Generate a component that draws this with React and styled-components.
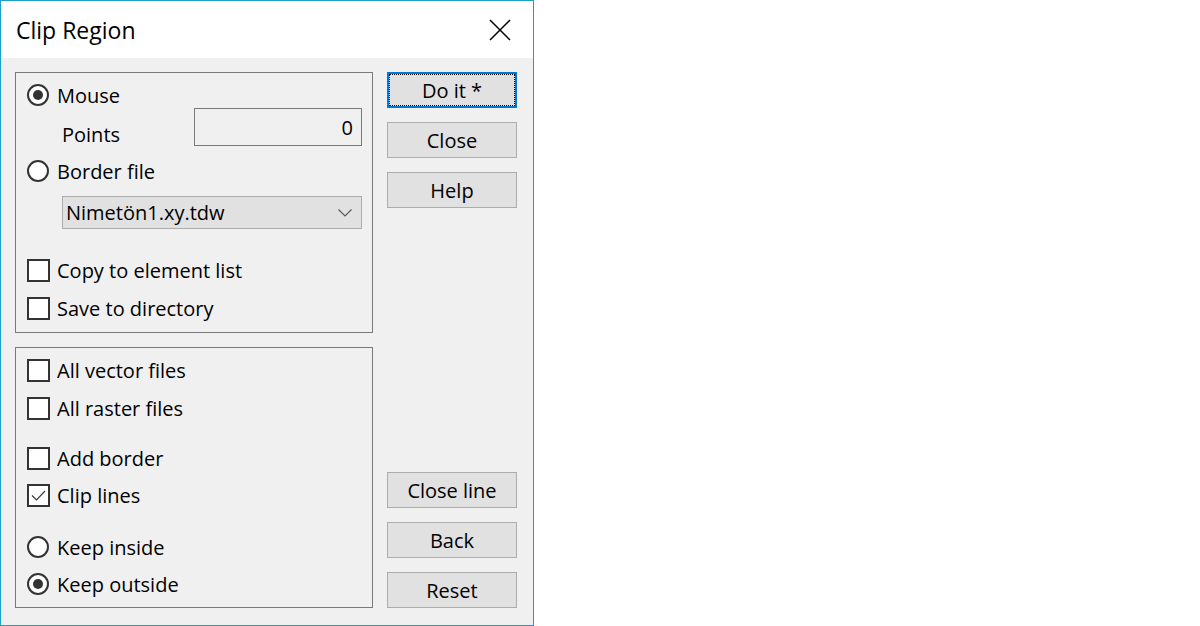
import styled, { createGlobalStyle } from "styled-components";

const Global = createGlobalStyle`
  body {
    margin: 0;
    background: #ffffff;
    font-family: "Open Sans", "Noto Sans", sans-serif;
  }
`;

const Window = styled.div`
  width: 534px;
  height: 626px;
  box-sizing: border-box;
  border: 1px solid #19a1c3;
  display: flex;
  flex-direction: column;
  color: #000;
`;

const TitleBar = styled.div`
  height: 57px;
  flex-shrink: 0;
  background: #fff;
  display: flex;
  align-items: center;
  justify-content: space-between;
  padding: 0 22px 0 15px;
`;

const Title = styled.div`
  font-size: 23px;
  line-height: 30px;
  margin-top: 1px;
`;

const Body = styled.div`
  flex: 1;
  background: #f0f0f0;
  display: flex;
  gap: 14px;
  padding: 14px 16px 17px 14px;
`;

const LeftCol = styled.div`
  width: 358px;
  display: flex;
  flex-direction: column;
  gap: 14px;
`;

const Group = styled.div`
  height: 261px;
  box-sizing: border-box;
  border: 1px solid #7a7a7a;
  padding: 10px 10px 0 11px;
  display: flex;
  flex-direction: column;
`;

const Row = styled.div`
  height: ${(p) => p.$h || 24}px;
  margin-top: ${(p) => p.$top || 0}px;
  display: flex;
  align-items: ${(p) => (p.$h ? "flex-start" : "center")};
  font-size: 20px;
  white-space: nowrap;
`;

const Slot = styled.div`
  width: 23px;
  height: 24px;
  display: flex;
  align-items: center;
  margin-right: 7px;
`;

const Radio = styled.div`
  width: 22px;
  height: 22px;
  box-sizing: border-box;
  border: 2px solid #333;
  border-radius: 50%;
  background: #fff;
  display: flex;
  align-items: center;
  justify-content: center;
  &::after {
    content: "";
    width: 10px;
    height: 10px;
    border-radius: 50%;
    background: ${(p) => (p.$on ? "#333" : "transparent")};
  }
`;

const Check = styled.div`
  width: 23px;
  height: 23px;
  box-sizing: border-box;
  border: 2px solid #333;
  background: #fff;
  display: flex;
  align-items: center;
  justify-content: center;
`;

const Label = styled.span`
  line-height: 24px;
  margin-top: 1px;
`;

const SubLabel = styled.span`
  line-height: 24px;
  margin: 15px 0 0 35px;
`;

const NumberBox = styled.div`
  margin-left: auto;
  width: 168px;
  height: 38px;
  box-sizing: border-box;
  border: 1px solid #7a7a7a;
  background: #f0f0f0;
  display: flex;
  align-items: center;
  justify-content: flex-end;
  padding-right: 8px;
`;

const Select = styled.div`
  margin-left: 35px;
  width: 300px;
  height: 33px;
  box-sizing: border-box;
  border: 1px solid #adadad;
  background: #e1e1e1;
  display: flex;
  align-items: center;
  justify-content: space-between;
  padding: 0 9px 0 3px;
  font-size: 20px;
`;

const RightCol = styled.div`
  width: 130px;
  display: flex;
  flex-direction: column;
  gap: 14px;
`;

const Spacer = styled.div`
  flex: 1;
`;

const Button = styled.button`
  position: relative;
  height: 36px;
  box-sizing: border-box;
  border: ${(p) => (p.$focus ? "2px solid #0078d7" : "1px solid #adadad")};
  background: #e1e1e1;
  font-family: inherit;
  font-size: 20px;
  color: #000;
  padding: 0;
  &::after {
    content: "";
    display: ${(p) => (p.$focus ? "block" : "none")};
    position: absolute;
    inset: 0;
    border: 1px dotted #000;
  }
`;

const CloseIcon = () => (
  <svg width="22" height="22" viewBox="0 0 22 22">
    <path d="M1 1L21 21M21 1L1 21" stroke="#000" strokeWidth="1.5" fill="none" />
  </svg>
);

const Chevron = () => (
  <svg width="14" height="8" viewBox="0 0 14 8">
    <path d="M0.5 0.5L7 7L13.5 0.5" stroke="#5a5a5a" strokeWidth="1.2" fill="none" />
  </svg>
);

const Tick = () => (
  <svg width="19" height="19" viewBox="0 0 19 19">
    <path d="M3 9.5L7.5 14L16 5" stroke="#333" strokeWidth="1.1" fill="none" />
  </svg>
);

const RadioRow = ({ top, on, children }) => (
  <Row $top={top}>
    <Slot>
      <Radio $on={on} />
    </Slot>
    <Label>{children}</Label>
  </Row>
);

const CheckRow = ({ top, on, children }) => (
  <Row $top={top}>
    <Slot>
      <Check>{on && <Tick />}</Check>
    </Slot>
    <Label>{children}</Label>
  </Row>
);

export default function App() {
  return (
    <>
      <Global />
      <Window>
        <TitleBar>
          <Title>Clip Region</Title>
          <CloseIcon />
        </TitleBar>
        <Body>
          <LeftCol>
            <Group>
              <RadioRow on>Mouse</RadioRow>
              <Row $h={38} $top={1}>
                <SubLabel>Points</SubLabel>
                <NumberBox>0</NumberBox>
              </Row>
              <RadioRow top={13}>Border file</RadioRow>
              <Row $h={33} $top={13}>
                <Select>
                  <span>Nimetön1.xy.tdw</span>
                  <Chevron />
                </Select>
              </Row>
              <CheckRow top={29}>Copy to element list</CheckRow>
              <CheckRow top={14}>Save to directory</CheckRow>
            </Group>
            <Group>
              <CheckRow>All vector files</CheckRow>
              <CheckRow top={14}>All raster files</CheckRow>
              <CheckRow top={26}>Add border</CheckRow>
              <CheckRow top={13} on>Clip lines</CheckRow>
              <RadioRow top={28}>Keep inside</RadioRow>
              <RadioRow top={13} on>Keep outside</RadioRow>
            </Group>
          </LeftCol>
          <RightCol>
            <Button $focus>Do it *</Button>
            <Button>Close</Button>
            <Button>Help</Button>
            <Spacer />
            <Button>Close line</Button>
            <Button>Back</Button>
            <Button>Reset</Button>
          </RightCol>
        </Body>
      </Window>
    </>
  );
}
